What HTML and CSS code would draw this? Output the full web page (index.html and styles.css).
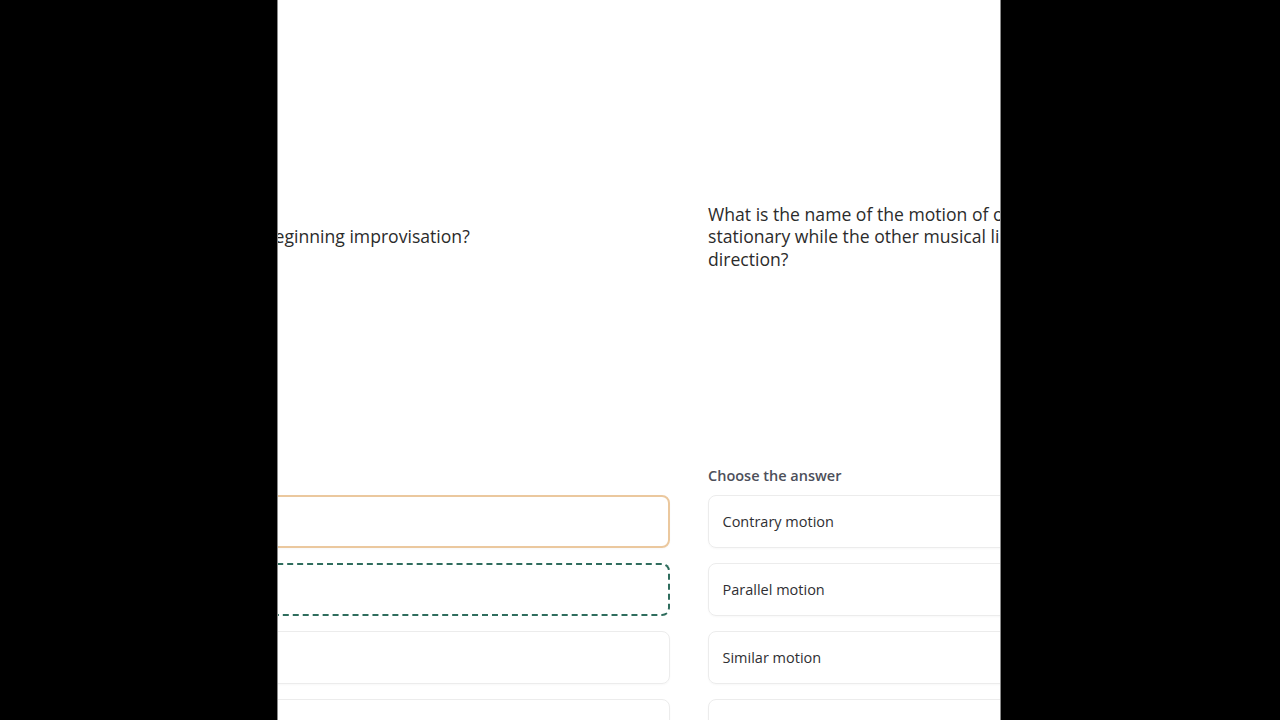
FILE: index.html
```html
<!DOCTYPE html>
<html lang="en">
<head>
<meta charset="utf-8">
<title>Quiz</title>
<link rel="stylesheet" href="styles.css">
</head>
<body>
<div class="stage">
  <div class="panel">
    <div class="track">
      <section class="card card-prev">
        <div class="question">
          <p class="q-text">What scale is good for beginning improvisation?</p>
        </div>
        <div class="label label-faded">Choose the answer</div>
        <div class="options">
          <div class="option option-selected"></div>
          <div class="option option-correct"></div>
          <div class="option"></div>
          <div class="option"></div>
        </div>
      </section>
      <section class="card">
        <div class="question">
          <p class="q-text">What is the name of the motion of one musical line that stays<br>stationary while the other musical line moves in either<br>direction?</p>
        </div>
        <div class="label">Choose the answer</div>
        <div class="options">
          <div class="option">Contrary motion</div>
          <div class="option">Parallel motion</div>
          <div class="option">Similar motion</div>
          <div class="option">Oblique motion</div>
        </div>
      </section>
    </div>
  </div>
</div>
</body>
</html>
```
FILE: styles.css
```css
html, body {
  margin: 0;
  padding: 0;
  background: #000;
  height: 100%;
  overflow: hidden;
}
.stage {
  width: 1280px;
  height: 720px;
  display: flex;
  justify-content: flex-start;
  background: #000;
}
.panel {
  margin-left: 278px;
  width: 722px;
  height: 720px;
  background: #fff;
  overflow: hidden;
  box-shadow: -1px 0 0 #8a8a8a, 1px 0 0 #8a8a8a;
}
.track {
  display: flex;
  gap: 38px;
  margin-left: -208px;
}
.card {
  flex: 0 0 600px;
  width: 600px;
  padding-top: 13px;
  font-family: "Open Sans", "Noto Sans", sans-serif;
}
.question {
  height: 447px;
  display: flex;
  align-items: center;
}
.card-prev .question {
  padding-left: 9px;
}
.q-text {
  margin: 0;
  font-size: 17.6px;
  line-height: 22.5px;
  color: #2b2b2b;
  white-space: nowrap;
}
.label {
  height: 18px;
  line-height: 18px;
  font-size: 14.5px;
  font-weight: 600;
  color: #4d4f5a;
  margin-top: 7px;
}
.label-faded {
  color: #fdfcfa;
}
.options {
  margin-top: 10px;
  display: flex;
  flex-direction: column;
  gap: 15px;
}
.option {
  height: 53px;
  box-sizing: border-box;
  border: 1.5px solid #ececec;
  border-radius: 8px;
  display: flex;
  align-items: center;
  padding-left: 13.5px;
  font-size: 14.5px;
  color: #2f2f33;
  box-shadow: 0 1px 2px rgba(0,0,0,0.03);
}
.option-selected {
  border: 2px solid #ebc89e;
}
.option-correct {
  border: 2px dashed #2f6d5d;
  box-shadow: none;
}
```
